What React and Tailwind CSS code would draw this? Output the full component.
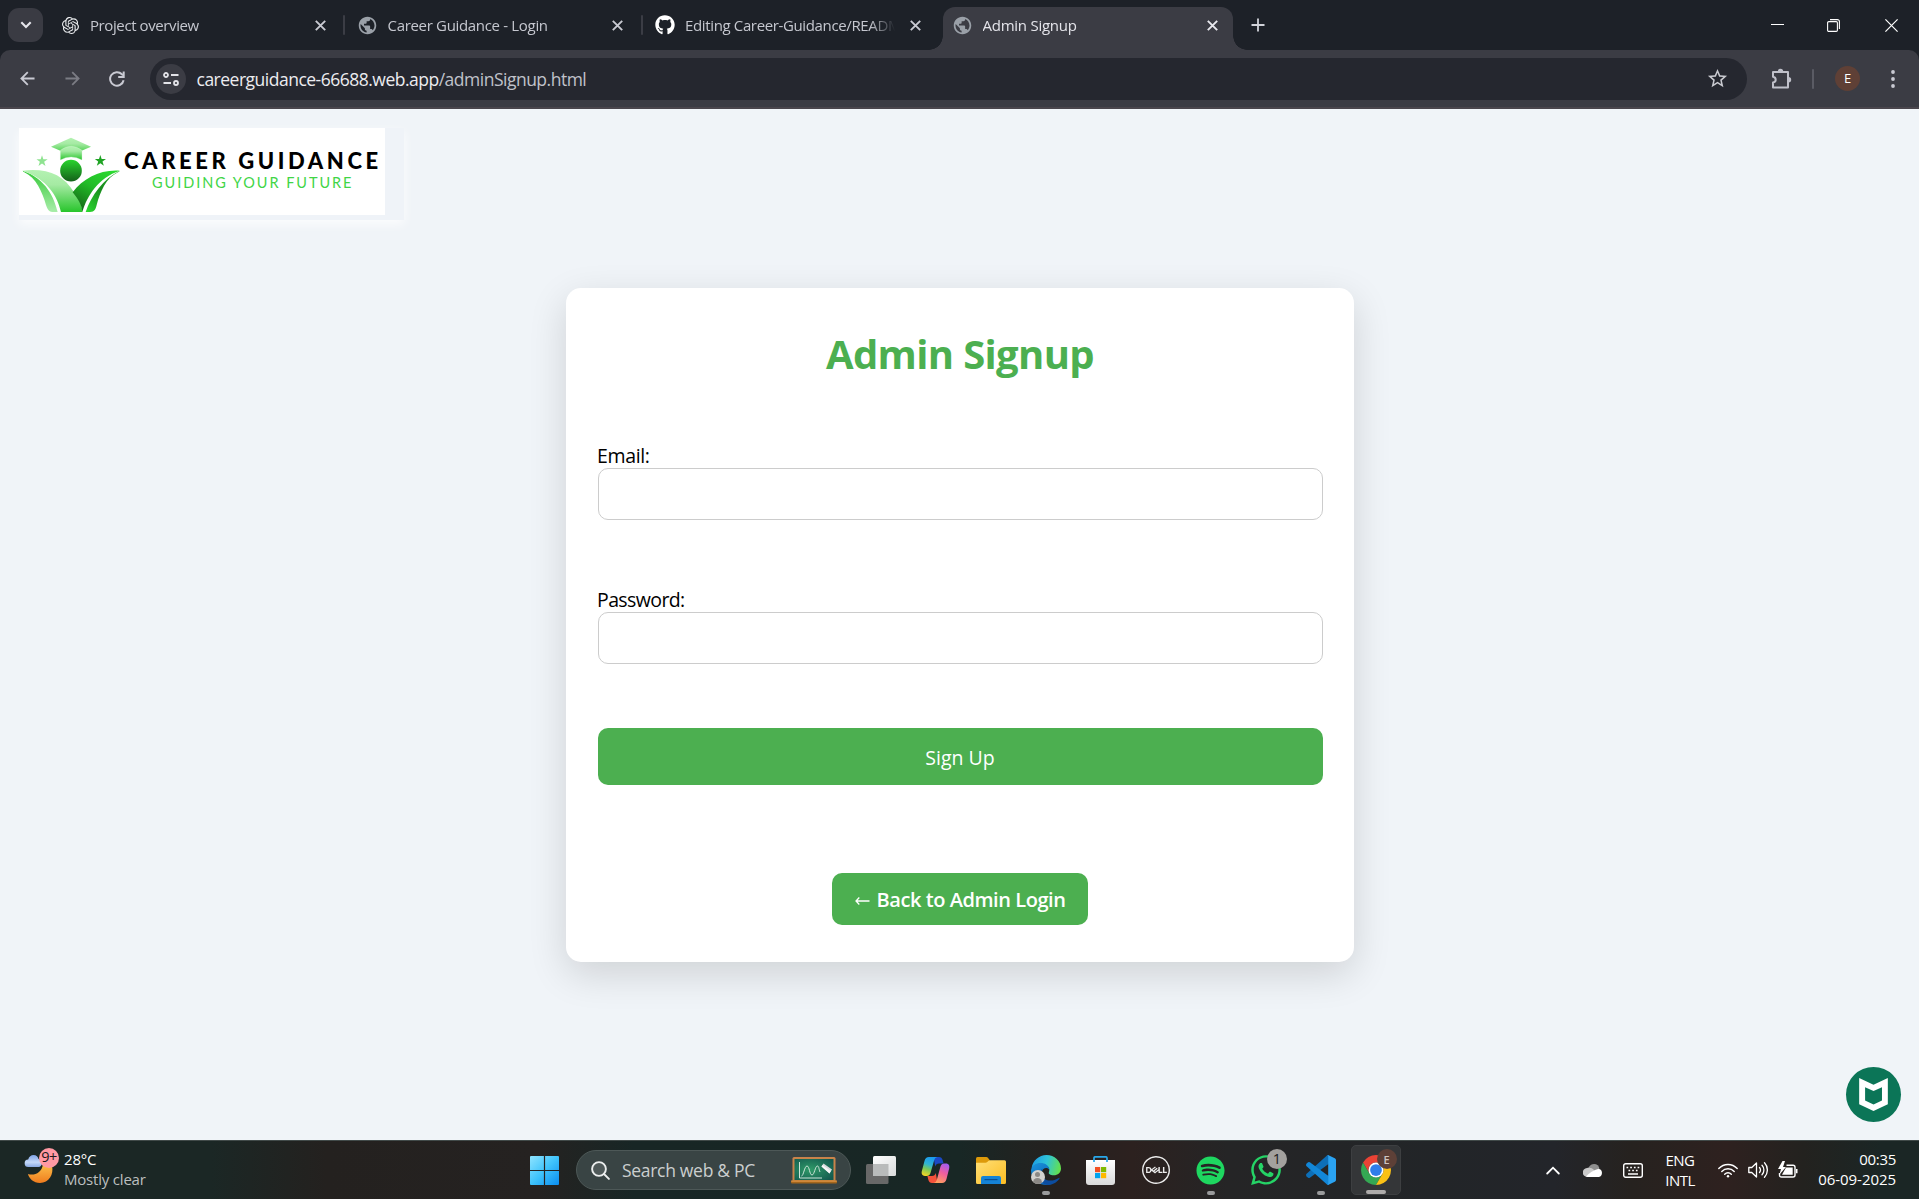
import React from "react";
import { SiOpenai, SiDell, SiMcafee } from "react-icons/si";
import { FaGithub, FaSpotify, FaWhatsapp } from "react-icons/fa";
import { MdPublic, MdStarBorder } from "react-icons/md";

function Cross({ className }) {
  return (
    <svg viewBox="0 0 13 13" className={`size-[13px] shrink-0 ${className}`} fill="none" stroke="currentColor" strokeWidth="1.9">
      <path d="M1.8 1.8l9.4 9.4M11.2 1.8L1.8 11.2" />
    </svg>
  );
}

function Tab({ icon, title, active, tracking, separator = true }) {
  return (
    <div className="relative flex h-full w-[297.5px] shrink-0 items-center pl-[14.5px]">
      {active && (
        <div className="absolute top-[7px] right-[4px] bottom-0 left-[4px] rounded-t-[12px] bg-[#3b3c44]">
          <div className="absolute bottom-0 -left-[14px] size-[14px] bg-[radial-gradient(circle_at_0_0,transparent_13.5px,#3b3c44_14px)]" />
          <div className="absolute -right-[14px] bottom-0 size-[14px] bg-[radial-gradient(circle_at_100%_0,transparent_13.5px,#3b3c44_14px)]" />
        </div>
      )}
      <div className="relative flex w-[18px] shrink-0 items-center justify-center">{icon}</div>
      <div
        className={`relative ml-[11px] w-[210px] shrink-0 overflow-hidden mask-r-from-88% text-[15px] leading-[20px] whitespace-nowrap ${tracking} ${active ? "text-[#e4e4ea]" : "text-[#c5c7cf]"}`}
      >
        {title}
      </div>
      <Cross className={`relative ml-[13.5px] ${active ? "text-[#e8e8ee]" : "text-[#c9cad2]"}`} />
      {separator && <div className="-mr-px ml-auto h-[20px] w-[2px] rounded bg-[#3b3d45]" />}
    </div>
  );
}

function TabStrip() {
  return (
    <div className="flex h-[50px] items-center bg-[#1d2128]">
      <div className="ml-[8px] flex h-[34px] w-[35px] items-center justify-center rounded-[11px] bg-[#3a3b43]">
        <svg viewBox="0 0 12 8" className="w-[12px]" fill="none" stroke="#e6e6ec" strokeWidth="2.1">
          <path d="M1.3 1.3L6 6l4.7-4.7" />
        </svg>
      </div>
      <div className="ml-[3.5px] flex h-full">
        <Tab icon={<SiOpenai className="size-[17px] shrink-0 text-[#eceef0]" />} title="Project overview" tracking="tracking-[-0.4px]" />
        <Tab icon={<MdPublic className="size-[21px] shrink-0 text-[#9aa0a8]" />} title="Career Guidance - Login" tracking="tracking-[-0.32px]" />
        <Tab icon={<FaGithub className="size-[20px] shrink-0 text-white" />} title="Editing Career-Guidance/READM" tracking="tracking-[-0.36px]" separator={false} />
        <Tab icon={<MdPublic className="size-[21px] shrink-0 text-[#9aa0a8]" />} title="Admin Signup" tracking="tracking-[-0.25px]" active separator={false} />
      </div>
      <svg viewBox="0 0 14 14" className="ml-[14.5px] size-[14px]" stroke="#d2d3da" strokeWidth="1.8">
        <path d="M7 .5v13M.5 7h13" />
      </svg>
      <div className="mr-[21px] ml-auto flex h-full items-center text-white">
        <svg viewBox="0 0 13 13" className="size-[13px]" stroke="currentColor" strokeWidth="1">
          <path d="M0 5.5h13" />
        </svg>
        <svg viewBox="0 0 13 13" className="ml-[43px] size-[13px]" fill="none" stroke="currentColor" strokeWidth="1.1">
          <rect x=".6" y="2.6" width="9.8" height="9.8" rx="1.2" />
          <path d="M3 .6h7.4a2 2 0 0 1 2 2V10" />
        </svg>
        <svg viewBox="0 0 13 13" className="ml-[45px] size-[13px]" stroke="currentColor" strokeWidth="1.2">
          <path d="M.4.4l12.2 12.2M12.6.4L.4 12.6" />
        </svg>
      </div>
    </div>
  );
}

function Toolbar() {
  return (
    <div className="bg-[#1d2128]">
      <div className="flex h-[59px] items-center rounded-t-[10px] border-b-2 border-[#4a464d] bg-[#3b3c44]">
        <svg viewBox="0 0 16 16" className="ml-[20px] size-[15px]" fill="none" stroke="#c9cad3" strokeWidth="1.9">
          <path d="M15.5 8H1.8M8.3 1.2L1.5 8l6.8 6.8" />
        </svg>
        <svg viewBox="0 0 16 16" className="ml-[30px] size-[15px]" fill="none" stroke="#7b7c84" strokeWidth="1.9">
          <path d="M.5 8h13.7M7.7 1.2L14.5 8l-6.8 6.8" />
        </svg>
        <svg viewBox="0 0 16 16" className="ml-[29px] size-[16px]" fill="none" stroke="#c9cad3" strokeWidth="2">
          <path d="M14.6 9.3A6.8 6.8 0 1 1 12.9 3.3L14 4.4" />
          <path d="M14.7.4v5.5H9.2" />
        </svg>
        <div className="ml-[25px] flex h-[42px] w-[1597px] items-center rounded-full bg-[#25272f]">
          <div className="ml-[6px] flex size-[30px] items-center justify-center rounded-full bg-[#3b3c44]">
            <svg viewBox="0 0 16 14" className="w-[16px]" fill="none" stroke="#e3e3e8" strokeWidth="1.8">
              <circle cx="3" cy="3" r="2" />
              <path d="M8 3h7.5M.5 11H8" />
              <circle cx="13" cy="11" r="2" />
            </svg>
          </div>
          <div className="ml-[10.5px] pt-px text-[17.5px] leading-[24px] tracking-[-0.5px] whitespace-nowrap text-[#ececf0]">
            careerguidance-66688.web.app<span className="text-[#c0c2ca]">/adminSignup.html</span>
          </div>
          <MdStarBorder className="mr-[18px] ml-auto size-[23px] text-[#c9cad0]" />
        </div>
        <svg viewBox="0 0 22 22" className="ml-[24px] size-[22px]" fill="none" stroke="#c0c1ca" strokeWidth="2">
          <path d="M2 4h15v15.5H2v-5c3.6-.7 3.6-5 0-5.7z" strokeLinejoin="round" />
          <path d="M6.8 3.5a2.7 2.7 0 0 1 5.4 0zM17.5 9a2.7 2.7 0 0 1 0 5.4z" fill="#c0c1ca" stroke="none" />
        </svg>
        <div className="ml-[19px] h-[20px] w-[2px] rounded bg-[#5a5b64]" />
        <div className="ml-[21px] flex size-[25px] items-center justify-center rounded-full bg-[#5f4036] text-[13px] leading-none text-white">E</div>
        <svg viewBox="0 0 4 18" className="ml-[31px] h-[18px] w-[4px]" fill="#c9cad3">
          <circle cx="2" cy="2" r="1.9" />
          <circle cx="2" cy="9" r="1.9" />
          <circle cx="2" cy="16" r="1.9" />
        </svg>
      </div>
    </div>
  );
}

function LogoMark() {
  return (
    <svg viewBox="57 69 306 261" className="h-[87px] w-[102px] shrink-0">
      <defs>
        <linearGradient id="lg-light" x1="0" y1="0" x2="0" y2="1">
          <stop offset="0" stopColor="#b4f2b2" />
          <stop offset=".35" stopColor="#a5eaa3" />
          <stop offset="1" stopColor="#28c52c" />
        </linearGradient>
        <linearGradient id="lg-lightflip" x1="0" y1="0" x2="0" y2="1">
          <stop offset="0" stopColor="#35c938" />
          <stop offset="1" stopColor="#a9edaa" />
        </linearGradient>
        <linearGradient id="lg-dark" x1=".8" y1="0" x2=".2" y2="1">
          <stop offset="0" stopColor="#2bd930" />
          <stop offset=".45" stopColor="#22bb27" />
          <stop offset="1" stopColor="#146317" />
        </linearGradient>
        <linearGradient id="lg-outer" x1="1" y1="0" x2="0" y2="1">
          <stop offset="0" stopColor="#1fae24" />
          <stop offset=".5" stopColor="#1a8c1e" />
          <stop offset="1" stopColor="#2bdc30" />
        </linearGradient>
        <linearGradient id="lg-head" x1="0" y1="0" x2="0" y2="1">
          <stop offset="0" stopColor="#29d42e" />
          <stop offset="1" stopColor="#14601a" />
        </linearGradient>
      </defs>
      <path d="M213 98l60 27-60 26-60-26z" fill="url(#lg-light)" />
      <path d="M181 136q32-24 65 0v29q-33-18-65 0z" fill="url(#lg-light)" stroke="#d9f7d9" strokeWidth="1" />
      <circle cx="213" cy="197" r="32.5" fill="url(#lg-head)" />
      <path d="M126 151l4 12h13l-10.5 7.5 4 12.5-10.5-7.6-10.5 7.6 4-12.5L109.5 163h12.5z" fill="#8fe391" />
      <path d="M301 150l4 12h13l-10.5 7.5 4 12.5-10.5-7.6-10.5 7.6 4-12.5L284.5 162h12.5z" fill="#1fa324" />
      <path d="M68 197Q69 201 73 202C108 218 127 262 138 300C143 316 148 321 162 321H173C163 280 140 222 68 197z" fill="url(#lg-lightflip)" />
      <path d="M68 197C140 189 190 208 222 262C240 285 247 305 247 321H183C173 274 142 222 68 197z" fill="url(#lg-light)" />
      <path d="M359 197C300 193 250 220 218 262C236 284 246 303 247 321C262 270 296 218 359 197z" fill="url(#lg-dark)" />
      <path d="M359 197C310 222 274 270 257 321H270C284 321 287 312 290 300C300 262 318 218 354 202Q358 200 359 197z" fill="url(#lg-outer)" />
    </svg>
  );
}

function Logo() {
  return (
    <div className="mt-[19px] ml-[19px] h-[92px] w-[385px] bg-[#eff3f8] shadow-[0_4px_10px_rgba(255,255,255,0.8)]">
      <div className="flex h-[87px] w-[366px] bg-white">
        <LogoMark />
        <div className="flex flex-col pt-[22px] pl-[3px] whitespace-nowrap">
          <div className="font-[Lato,sans-serif] text-[22px] leading-[22px] font-black tracking-[3.6px] text-black">CAREER GUIDANCE</div>
          <div className="pt-px pl-[28px] font-[Lato,sans-serif] text-[14.5px] leading-[20px] tracking-[1.95px] text-[#41d546]">GUIDING YOUR FUTURE</div>
        </div>
      </div>
    </div>
  );
}

function Page() {
  return (
    <div className="flex h-[1031px] flex-col bg-[#f0f4f8] text-black">
      <Logo />
      <div className="mt-[68px] ml-[566px] flex h-[674px] w-[788px] flex-col rounded-[15px] bg-white px-[32px] pt-[36px] shadow-[0_12px_38px_rgba(0,0,0,0.14)]">
        <h1 className="text-center text-[40px] leading-[60px] font-bold tracking-[-0.65px] text-[#4caf50]">Admin Signup</h1>
        <label className="mt-[59px] -ml-px text-[19.5px] leading-[26px] tracking-[-0.35px]">Email:</label>
        <div className="-mt-px h-[52px] w-[725px] rounded-[10px] border border-[#ccc]" />
        <label className="mt-[67px] -ml-px text-[19.5px] leading-[26px] tracking-[-0.6px]">Password:</label>
        <div className="-mt-px h-[52px] w-[725px] rounded-[10px] border border-[#ccc]" />
        <button className="mt-[64px] h-[57px] w-[725px] rounded-[10px] bg-[#4caf50] pt-[2px] pr-px text-[19.5px] text-white">Sign Up</button>
        <button className="mt-[88px] flex h-[52px] w-[256px] items-center justify-center gap-[7px] self-center rounded-[10px] bg-[#4caf50] pt-[2px] text-[20px] font-semibold tracking-[-0.44px] text-white">
          <svg viewBox="0 0 15 10" className="mt-[2px] h-[10px] w-[15px]" fill="none" stroke="white" strokeWidth="1.3">
            <path d="M14.5 5H1M4.3 1.5L1 5l3.3 3.5" />
          </svg>
          Back to Admin Login
        </button>
      </div>
      <div className="mt-auto mr-[18px] mb-[18px] flex size-[55px] items-center justify-center self-end rounded-full bg-[#0b7557]">
        <SiMcafee className="size-[33px] text-white" />
      </div>
    </div>
  );
}

function Slot({ children, mark }) {
  return (
    <div className="relative flex h-full items-center justify-center">
      {children}
      {mark && <div className="absolute bottom-[4px] h-[4px] w-[8px] rounded-full bg-[#9a9b9c]" />}
    </div>
  );
}

function WindowsLogo() {
  return (
    <svg viewBox="0 0 29 29" className="size-[29px]">
      <defs>
        <linearGradient id="win" x1="0" y1="0" x2="1" y2="1">
          <stop offset="0" stopColor="#8fe4ff" />
          <stop offset=".5" stopColor="#3fc3fb" />
          <stop offset="1" stopColor="#0a8df0" />
        </linearGradient>
      </defs>
      <path d="M1 0h12.9v13.9H0V1a1 1 0 0 1 1-1zM15.1 0H28a1 1 0 0 1 1 1v12.9H15.1zM0 15.1h13.9V29H1a1 1 0 0 1-1-1zM15.1 15.1H29V28a1 1 0 0 1-1 1H15.1z" fill="url(#win)" />
    </svg>
  );
}

function Chalkboard() {
  return (
    <svg viewBox="0 0 46 27" className="h-[27px] w-[46px]">
      <defs>
        <radialGradient id="board" cx=".4" cy=".5" r=".7">
          <stop offset="0" stopColor="#2f9a68" />
          <stop offset="1" stopColor="#13594f" />
        </radialGradient>
      </defs>
      <rect x="1.5" y="0" width="43" height="25" rx="1.5" fill="#c8834a" />
      <rect x="3.5" y="2" width="39" height="21" fill="url(#board)" />
      <path d="M8.5 5v16H31" fill="none" stroke="#cde5da" strokeWidth="1" />
      <path d="M10.5 19c2 0 3-10 5.500-10s2.500 9 5 9 3-9 5.500-9c1.500 0 1.500 4 2.500 6" fill="none" stroke="#cde5da" strokeWidth="1" />
      <path d="M30.5 9.5l2-3 8.500 6-2.500 4z" fill="#d8dadd" />
      <path d="M30.5 9.5l1-1.500 8.300 6-1.300 2.500z" fill="#f5f6f7" />
      <rect x="0" y="23.5" width="46" height="3" rx="1" fill="#a4661c" />
      <rect x="0" y="23.5" width="46" height="1.2" rx=".6" fill="#dc9343" />
    </svg>
  );
}

function TaskView() {
  return (
    <svg viewBox="0 0 30 28" className="h-[28px] w-[30px]">
      <defs>
        <linearGradient id="tv" x1="0" y1="0" x2="1" y2="1">
          <stop offset="0" stopColor="#fff" />
          <stop offset="1" stopColor="#d8dadb" />
        </linearGradient>
      </defs>
      <rect x="0" y="8" width="22.5" height="20" rx="1.5" fill="#686868" />
      <rect x="7" y="0" width="23" height="20" rx="1.5" fill="url(#tv)" />
      <rect x="7" y="8" width="15.5" height="12" fill="#b9bbbb" />
    </svg>
  );
}

function Copilot() {
  return (
    <svg viewBox="0 0 28 26" className="h-[26px] w-[29px]">
      <defs>
        <linearGradient id="cpa" x1=".6" y1="0" x2=".3" y2="1">
          <stop offset="0" stopColor="#1a9af0" />
          <stop offset=".4" stopColor="#2fb4d4" />
          <stop offset=".65" stopColor="#78c85a" />
          <stop offset="1" stopColor="#f2d425" />
        </linearGradient>
        <linearGradient id="cpb" x1=".7" y1="0" x2=".3" y2="1">
          <stop offset="0" stopColor="#a45cf0" />
          <stop offset=".45" stopColor="#ee5d9e" />
          <stop offset="1" stopColor="#ffa05c" />
        </linearGradient>
      </defs>
      <path d="M12 0h5.500c2 0 3 1 3.600 3l1 3.500h-4.600c-2 0-3.200 1-3.800 3z" fill="#1b48c4" />
      <path d="M16 26h-5.500c-2 0-3-1-3.600-3l-1-4h4.600c2 0 3.200-1 3.800-3z" fill="#f4523b" />
      <path d="M7.500 0H16c-2 .3-2.800 1.500-3.400 3.500L9 16c-.6 2-1.800 3-3.800 3H3.500C.8 19-.3 16.800.3 14.300L3 4C3.700 1.500 5 0 7.500 0z" fill="url(#cpa)" />
      <path d="M20.500 26H12c2-.3 2.800-1.500 3.400-3.500L19 9.500c.6-2 1.800-3 3.800-3h1.700c2.700 0 3.800 2.200 3.200 4.700L25 22c-.7 2.500-2 4-4.500 4z" fill="url(#cpb)" />
    </svg>
  );
}

function Explorer() {
  return (
    <svg viewBox="0 0 30 27" className="h-[27px] w-[30px]">
      <defs>
        <linearGradient id="fold" x1="0" y1="0" x2="1" y2="1">
          <stop offset="0" stopColor="#ffdf77" />
          <stop offset="1" stopColor="#fbbd22" />
        </linearGradient>
      </defs>
      <path d="M0 1.500Q0 0 1.500 0h8.800q1 0 1.600.7L14 3.500V10H0z" fill="#dd9a0a" />
      <path d="M0 5.800h9.500q1 0 1.800-.8l1-.9q.8-.8 2-.8H28.500Q30 3.300 30 4.800V25.500Q30 27 28.500 27H1.500Q0 27 0 25.500z" fill="url(#fold)" />
      <path d="M5 27v-6q0-2 2-2h16q2 0 2 2v6z" fill="#1583d6" />
      <path d="M8.500 22.600h13" stroke="#0b4f92" strokeWidth="1.2" />
    </svg>
  );
}

function Edge() {
  return (
    <div className="relative size-[30px]">
      <svg viewBox="0 0 30 30" className="size-[30px]">
        <defs>
          <linearGradient id="ed1" x1="0" y1=".3" x2="1" y2=".5">
            <stop offset="0" stopColor="#1c9be4" />
            <stop offset=".5" stopColor="#2fc3d8" />
            <stop offset="1" stopColor="#63e04e" />
          </linearGradient>
          <linearGradient id="ed2" x1="0" y1="0" x2=".6" y2="1">
            <stop offset="0" stopColor="#1a94dd" />
            <stop offset="1" stopColor="#0b62b4" />
          </linearGradient>
        </defs>
        <path d="M.6 13C1.800 5.500 8 0 15.500 0 23.500 0 30 6 30 13.500c0 4.300-3.200 6.800-7.300 6.800-3.600 0-5.400-1.400-4.900-2.700 1.200-2.600.4-5.600-3-7.600-4-2.300-10.500-1.500-14.200 3z" fill="url(#ed1)" />
        <path d="M0 15.500C.5 10.500 5 8 9.500 8c5.500 0 9 3.500 9 7-1.800-3.300-7-2.500-7.700 2C10 22.500 14 28 20 29.200 11 32 0 26.500 0 15.500z" fill="url(#ed2)" />
        <path d="M12 13.500c-2.500 2-2.500 7 .5 9.700 4 3.600 10.500 2.800 15.300-.2.800-.4 1 0 .6.700C25.500 28 20.500 30 16 30c-5.500-1.500-8.500-6-8-10.500.2-2.800 2-5 4-6z" fill="#0c4d9f" />
      </svg>
      <div className="absolute bottom-px left-0 size-[14px] overflow-hidden rounded-full bg-[#d3d1ce]">
        <div className="mx-auto mt-[2px] size-[5px] rounded-full bg-[#8b8885]" />
        <div className="mx-auto mt-px h-[8px] w-[9px] rounded-t-full bg-[#8b8885]" />
      </div>
    </div>
  );
}

function Store() {
  return (
    <svg viewBox="0 0 29 29" className="size-[29px]">
      <defs>
        <linearGradient id="bag" x1="0" y1="0" x2="0" y2="1">
          <stop offset="0" stopColor="#fff" />
          <stop offset="1" stopColor="#dadada" />
        </linearGradient>
      </defs>
      <path d="M0 4h29v22q0 3-3 3H3q-3 0-3-3z" fill="url(#bag)" />
      <path d="M8 6V2q0-1.200 1.200-1.200h10.600Q21 .8 21 2v4" fill="none" stroke="#29a8ea" strokeWidth="1.7" />
      <path d="M9 11h5.200v5.200H9z" fill="#f25022" />
      <path d="M15 11h5.200v5.200H15z" fill="#7fba00" />
      <path d="M9 17h5.200v5.200H9z" fill="#00a4ef" />
      <path d="M15 17h5.200v5.200H15z" fill="#ffb900" />
    </svg>
  );
}

function VsCode() {
  return (
    <svg viewBox="0 0 100 100" className="size-[30px]">
      <path d="M1 63L70 2q3-2 6-1v28L13 76q-3 2-6 0l-5-4q-3-4-1-9z" fill="#0d6fb8" />
      <path d="M1 37l69 61q3 2 6 1V71L13 24q-3-2-6 0l-5 4q-3 4-1 9z" fill="#1287d8" />
      <path d="M75 1l21 10q4 2 4 6v66q0 4-4 6L75 99q-3 1-6-2 5 2 5-3V6q0-5-5-3 3-3 6-2z" fill="#2aa3f2" />
    </svg>
  );
}

function Chrome() {
  return (
    <svg viewBox="0 0 48 48" className="size-[30px]">
      <path d="M24 12h20.78A24 24 0 0 0 3.22 12l10.39 18A12 12 0 0 1 24 12z" fill="#ea4335" />
      <path d="M34.39 30L24 48A24 24 0 0 1 3.22 12l10.39 18a12 12 0 0 0 20.78 0z" fill="#34a853" />
      <path d="M24 12h20.78A24 24 0 0 1 24 48l10.39-18A12 12 0 0 0 24 12z" fill="#fbc116" />
      <circle cx="24" cy="24" r="12" fill="#fff" />
      <circle cx="24" cy="24" r="9.4" fill="#2f7de9" />
    </svg>
  );
}

function Weather() {
  return (
    <div className="flex w-[517px] items-center">
      <div className="relative mb-[7px] ml-[24px] h-[36px] w-[36px]">
        <svg viewBox="0 0 36 36" className="size-[36px]">
          <defs>
            <linearGradient id="moon" x1="0" y1="0" x2="0" y2="1">
              <stop offset="0" stopColor="#fbc04a" />
              <stop offset="1" stopColor="#f07c1e" />
            </linearGradient>
            <linearGradient id="cloud" x1="0" y1="0" x2="0" y2="1">
              <stop offset="0" stopColor="#7fa3e6" />
              <stop offset=".6" stopColor="#c4d8f8" />
              <stop offset="1" stopColor="#8aaae4" />
            </linearGradient>
          </defs>
          <path d="M4 25c6 2 14-1 15-10l9 2c2 8-3 17-12 17C9.500 34 5 29.500 4 25z" fill="url(#moon)" />
          <path d="M4.500 18a3.700 3.700 0 0 1-.3-7.400C5 7.500 7 6 9.500 6c3 0 4.600 2 5 4 2 .3 3.500 2 3.500 4s-1.500 4-3.500 4z" fill="url(#cloud)" />
        </svg>
        <div className="absolute -top-px left-[15px] flex size-[20px] items-center justify-center rounded-full bg-[#ff99a3] text-[14.5px] leading-none tracking-[-0.5px] text-[#20181a]">9+</div>
      </div>
      <div className="mb-[2px] ml-[4px] text-[15px] leading-[20px]">
        <div className="tracking-[-0.2px] text-white">28°C</div>
        <div className="tracking-[-0.2px] text-[#bcbfbf]">Mostly clear</div>
      </div>
    </div>
  );
}

function Tray() {
  return (
    <div className="mr-[23px] ml-auto flex h-full w-[363px] items-center text-white">
      <div className="flex w-[120px]">
        <div className="flex w-[40px] items-center justify-center">
          <svg viewBox="0 0 14 9" className="w-[14px]" fill="none" stroke="currentColor" strokeWidth="1.8" strokeLinecap="round">
            <path d="M1.2 7.500L7 1.700l5.800 5.800" />
          </svg>
        </div>
        <div className="flex w-[40px] items-center justify-center">
          <svg viewBox="0 0 20 13" className="w-[20px]">
            <path d="M5.500 3.500C7 1 9 0 11 0c3 0 5 2 5.500 4.500L8 9z" fill="#8f8f8f" />
            <path d="M4.500 13A4.500 4.500 0 0 1 4 4c3-.8 5 0 7 2l5 7z" fill="#c9c9c9" />
            <path d="M3 12.500C6 9 11 6 15.500 4.800A4.200 4.200 0 0 1 15.800 13H4.500z" fill="#fff" />
          </svg>
        </div>
        <div className="flex w-[40px] items-center justify-center">
          <svg viewBox="0 0 20 15" className="w-[20px]" fill="none" stroke="currentColor" strokeWidth="1.4">
            <rect x=".7" y=".7" width="18.6" height="13.6" rx="2" />
            <path d="M3.500 4.500h13M5.500 7.500h10" strokeWidth="1.7" strokeDasharray="1.7 2" />
            <path d="M5 11h10" strokeWidth="1.5" />
          </svg>
        </div>
      </div>
      <div className="-ml-px w-[56px] text-center text-[15px] leading-[20px] tracking-[-0.5px]">
        <div>ENG</div>
        <div>INTL</div>
      </div>
      <div className="ml-[5px] flex w-[90px]">
        <div className="flex w-[30px] items-center justify-center">
          <svg viewBox="0 0 20 15" className="w-[20px]" fill="none" stroke="currentColor" strokeWidth="1.4" strokeLinecap="round">
            <path d="M.8 5.500a12.500 12.500 0 0 1 18.400 0M3.800 8.500a8.500 8.500 0 0 1 12.400 0M6.700 11.200a4.600 4.600 0 0 1 6.600 0" />
            <circle cx="10" cy="13.2" r="1.2" fill="currentColor" stroke="none" />
          </svg>
        </div>
        <div className="flex w-[30px] items-center justify-center">
          <svg viewBox="0 0 20 18" className="w-[20px]" fill="none" stroke="currentColor" strokeWidth="1.3" strokeLinecap="round" strokeLinejoin="round">
            <path d="M.8 6.500h3L8.500 2v14l-4.700-4.500h-3z" />
            <path d="M11.500 6.500a4 4 0 0 1 0 5M14 4.200a7 7 0 0 1 0 9.600M16.500 1.800a10.500 10.500 0 0 1 0 14.400" />
          </svg>
        </div>
        <div className="flex w-[30px] items-center justify-center">
          <svg viewBox="0 0 20 18" className="w-[20px]" fill="none" stroke="currentColor" strokeWidth="1.4">
            <path d="M8.500 4.200H15q2 0 2 2V14q0 2-2 2H3.500q-2 0-2-2v-2" />
            <path d="M8 6.500h6.700V13.700H4z" fill="currentColor" stroke="none" />
            <path d="M18 8h1.500v4.200H18z" fill="currentColor" stroke="none" />
            <path d="M4.500 0L0 8h3l-1.500 5.500L8 6H5l2-6z" fill="currentColor" stroke="none" />
          </svg>
        </div>
      </div>
      <div className="mb-[2px] ml-auto text-right text-[15px] leading-[20px] whitespace-nowrap">
        <div className="tracking-[-0.3px]">00:35</div>
        <div className="tracking-[-0.05px]">06-09-2025</div>
      </div>
    </div>
  );
}

function Taskbar() {
  return (
    <div className="flex h-[59px] items-center border-t border-[#414a49] bg-[linear-gradient(90deg,#1b2725_0%,#1b2725_11%,#24211f_17%,#252221_28%,#182625_33%,#182725_50%,#25211f_55%,#2c211f_59%,#252526_64%,#222528_75%,#23252a_81%,#26221f_85%,#2e211f_90%,#23221f_94%,#1b2625_98%,#1b2625_100%)]">
      <Weather />
      <div className="flex w-[55px] justify-center">
        <WindowsLogo />
      </div>
      <div className="ml-[4px] flex h-[40px] w-[275px] items-center rounded-full border border-[#4d5857] bg-[#394444]">
        <svg viewBox="0 0 19 19" className="ml-[14px] size-[19px]" fill="none" stroke="#eceeee" strokeWidth="1.9" strokeLinecap="round">
          <circle cx="8" cy="8" r="6.9" fill="#4f5959" />
          <path d="M13 13l4.900 4.900" />
        </svg>
        <div className="ml-[12px] text-[17.5px] leading-[24px] tracking-[-0.3px] whitespace-nowrap text-[#cbcfcf]">Search web &amp; PC</div>
        <div className="mr-[13px] ml-auto">
          <Chalkboard />
        </div>
      </div>
      <div className="ml-[2px] grid h-full w-[550px] shrink-0 grid-cols-10">
        <Slot><TaskView /></Slot>
        <Slot><Copilot /></Slot>
        <Slot><Explorer /></Slot>
        <Slot mark><Edge /></Slot>
        <Slot><Store /></Slot>
        <Slot><SiDell className="size-[28px] text-[#ececec]" /></Slot>
        <Slot mark><FaSpotify className="size-[29px] text-[#1ed760]" /></Slot>
        <Slot>
          <FaWhatsapp className="size-[34px] text-[#25d366]" />
          <div className="absolute top-[8px] left-[29px] flex size-[20px] items-center justify-center rounded-full bg-[#a3a19e] text-[14.5px] leading-none text-[#1c1c1c]">1</div>
        </Slot>
        <Slot mark><VsCode /></Slot>
        <Slot>
          <div className="relative flex size-[50px] items-center justify-center rounded-[5px] border border-[#3d3f41] bg-[#343638]">
            <Chrome />
            <div className="absolute top-[3px] left-[25px] flex size-[20px] items-center justify-center rounded-full bg-[#5d4037] text-[11px] leading-none font-semibold text-[#cfc4c0]">E</div>
            <div className="absolute bottom-0 h-[4px] w-[20px] rounded-full bg-[#aeacab]" />
          </div>
        </Slot>
      </div>
      <Tray />
    </div>
  );
}

export default function App() {
  return (
    <div className="flex h-[1199px] w-[1919px] flex-col overflow-hidden font-['Open_Sans',sans-serif]">
      <TabStrip />
      <Toolbar />
      <Page />
      <Taskbar />
    </div>
  );
}
